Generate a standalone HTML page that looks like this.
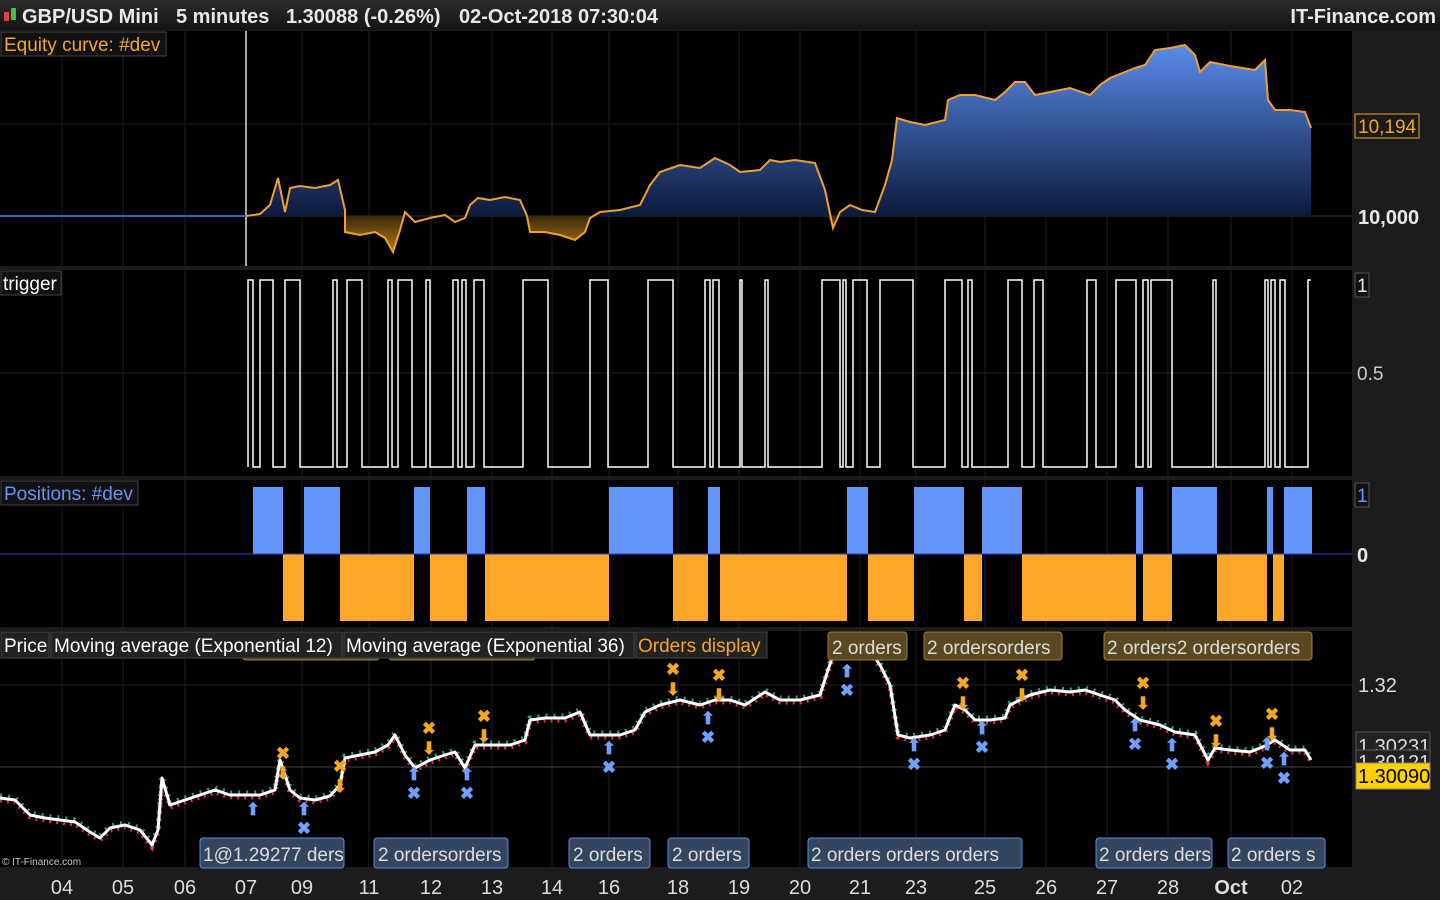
<!DOCTYPE html>
<html><head><meta charset="utf-8"><style>
html,body{margin:0;padding:0;background:#000;width:1440px;height:900px;overflow:hidden;font-family:"Liberation Sans",sans-serif}
svg text{font-family:"Liberation Sans",sans-serif}
</style></head><body>
<svg width="1440" height="900" viewBox="0 0 1440 900" xmlns="http://www.w3.org/2000/svg">
<defs>
<linearGradient id="hdr" x1="0" y1="0" x2="0" y2="1"><stop offset="0" stop-color="#2c2c2c"/><stop offset="1" stop-color="#141414"/></linearGradient>
<linearGradient id="blue" x1="0" y1="40" x2="0" y2="216" gradientUnits="userSpaceOnUse"><stop offset="0" stop-color="#5d8ff0"/><stop offset="1" stop-color="#0c1a3c"/></linearGradient>
<linearGradient id="org" x1="0" y1="216" x2="0" y2="255" gradientUnits="userSpaceOnUse"><stop offset="0" stop-color="#3a2a08"/><stop offset="1" stop-color="#c08020"/></linearGradient>
<clipPath id="above"><rect x="0" y="31" width="1352" height="185"/></clipPath>
<clipPath id="below"><rect x="0" y="216" width="1352" height="50"/></clipPath>
</defs>
<rect width="1440" height="900" fill="#1c1c1c"/>
<rect width="1440" height="30" fill="url(#hdr)"/>
<rect x="4" y="12" width="5" height="9" fill="#e04040"/><rect x="11" y="8" width="5" height="12" fill="#40c040"/>
<text x="22" y="23" font-size="20" font-weight="bold" fill="#e8e8e8">GBP/USD Mini</text>
<text x="176" y="23" font-size="20" font-weight="bold" fill="#e8e8e8">5 minutes</text>
<text x="286" y="23" font-size="20" font-weight="bold" fill="#e8e8e8">1.30088 (-0.26%)</text>
<text x="459" y="23" font-size="20" font-weight="bold" fill="#e8e8e8">02-Oct-2018 07:30:04</text>
<text x="1436" y="23" font-size="20" font-weight="bold" fill="#e8e8e8" text-anchor="end">IT-Finance.com</text>

<rect x="0" y="31" width="1352" height="235" fill="#000"/>
<rect x="0" y="270" width="1352" height="206" fill="#000"/>
<rect x="0" y="480" width="1352" height="147" fill="#000"/>
<rect x="0" y="631" width="1352" height="236" fill="#000"/>
<g stroke="#1e1e1e" stroke-width="1">
<path d="M62 31V867M123 31V867M185 31V867M302 31V867M369 31V867M431 31V867M492 31V867M552 31V867M609 31V867M678 31V867M739 31V867M800 31V867M860 31V867M916 31V867M985 31V867M1046 31V867M1107 31V867M1168 31V867M1231 31V867M1292 31V867"/>
<path d="M0 124H1352M0 373H1352M0 685H1352"/>
</g>
<path d="M0 216H1352" stroke="#333"/>
<path d="M0 767H1352" stroke="#444"/>
<path d="M246 31V266" stroke="#ddd" stroke-width="1.5"/>

<g>
<path id="eq" d="M246,216 L260,214 L270,205 L278,178 L285,212 L290,188 L300,186 L315,188 L330,185 L338,180 L345,210 L345,232 L360,235 L375,232 L385,238 L393,252 L400,230 L405,212 L415,222 L430,218 L445,215 L455,222 L465,218 L470,205 L478,198 L490,200 L505,197 L520,200 L527,216 L530,232 L545,232 L560,235 L575,240 L585,232 L590,218 L600,212 L620,210 L640,205 L650,185 L660,172 L680,165 L700,168 L715,158 L730,165 L740,172 L760,170 L770,160 L780,162 L795,160 L815,163 L825,190 L833,228 L840,212 L850,205 L862,210 L875,212 L885,185 L892,160 L897,118 L910,122 L925,125 L945,120 L948,100 L960,95 L975,95 L995,100 L1005,92 L1015,82 L1025,82 L1035,95 L1050,92 L1070,88 L1090,95 L1100,85 L1110,78 L1125,72 L1135,68 L1145,65 L1155,50 L1170,48 L1185,45 L1195,55 L1200,72 L1210,62 L1230,66 L1255,70 L1265,60 L1268,100 L1275,110 L1290,110 L1305,112 L1311,128" fill="none"/>
<path d="M246,216 L260,214 L270,205 L278,178 L285,212 L290,188 L300,186 L315,188 L330,185 L338,180 L345,210 L345,232 L360,235 L375,232 L385,238 L393,252 L400,230 L405,212 L415,222 L430,218 L445,215 L455,222 L465,218 L470,205 L478,198 L490,200 L505,197 L520,200 L527,216 L530,232 L545,232 L560,235 L575,240 L585,232 L590,218 L600,212 L620,210 L640,205 L650,185 L660,172 L680,165 L700,168 L715,158 L730,165 L740,172 L760,170 L770,160 L780,162 L795,160 L815,163 L825,190 L833,228 L840,212 L850,205 L862,210 L875,212 L885,185 L892,160 L897,118 L910,122 L925,125 L945,120 L948,100 L960,95 L975,95 L995,100 L1005,92 L1015,82 L1025,82 L1035,95 L1050,92 L1070,88 L1090,95 L1100,85 L1110,78 L1125,72 L1135,68 L1145,65 L1155,50 L1170,48 L1185,45 L1195,55 L1200,72 L1210,62 L1230,66 L1255,70 L1265,60 L1268,100 L1275,110 L1290,110 L1305,112 L1311,128 L1311,216 Z" fill="url(#blue)" clip-path="url(#above)"/>
<path d="M246,216 L345,216 L345,232 L360,235 L375,232 L385,238 L393,252 L400,230 L405,216 L527,216 L530,232 L545,232 L560,235 L575,240 L585,232 L590,216 L828,216 L833,228 L836,216 Z" fill="url(#org)" clip-path="url(#below)"/>
<path d="M0 216H246" stroke="#3a60c0" stroke-width="2"/>
<use href="#eq" stroke="#f0a030" stroke-width="2"/>
</g>
<rect x="1" y="32" width="165" height="24" fill="#111" stroke="#444"/>
<text x="4" y="51" font-size="19" fill="#f5a623">Equity curve: #dev</text>
<rect x="1355" y="114" width="64" height="24" fill="#1a1a1a" stroke="#f5a623"/>
<text x="1358" y="133" font-size="19" fill="#f5a623">10,194</text>
<text x="1358" y="224" font-size="20" font-weight="bold" fill="#e8e8e8">10,000</text>

<path d="M248,467 L248,280 L253,280 L253,467 L260,467 L260,280 L273,280 L273,467 L285,467 L285,280 L300,280 L300,467 L333,467 L333,280 L337,280 L337,467 L347,467 L347,280 L362,280 L362,467 L388,467 L388,280 L392,280 L392,467 L398,467 L398,280 L412,280 L412,467 L426,467 L426,280 L430,280 L430,467 L453,467 L453,280 L458,280 L458,467 L462,467 L462,280 L466,280 L466,467 L474,467 L474,280 L484,280 L484,467 L523,467 L523,280 L548,280 L548,467 L590,467 L590,280 L608,280 L608,467 L648,467 L648,280 L673,280 L673,467 L705,467 L705,280 L710,280 L710,467 L713,467 L713,280 L719,280 L719,467 L740,467 L740,280 L742,280 L742,467 L765,467 L765,280 L768,280 L768,467 L822,467 L822,280 L840,280 L840,467 L843,467 L843,280 L846,280 L846,467 L853,467 L853,280 L867,280 L867,467 L880,467 L880,280 L913,280 L913,467 L945,467 L945,280 L962,280 L962,467 L968,467 L968,280 L972,280 L972,467 L1008,467 L1008,280 L1022,280 L1022,467 L1034,467 L1034,280 L1043,280 L1043,467 L1087,467 L1087,280 L1096,280 L1096,467 L1116,467 L1116,280 L1136,280 L1136,467 L1143,467 L1143,280 L1148,280 L1148,467 L1151,467 L1151,280 L1172,280 L1172,467 L1213,467 L1213,280 L1216,280 L1216,467 L1265,467 L1265,280 L1268,280 L1268,467 L1271,467 L1271,280 L1275,280 L1275,467 L1280,467 L1280,280 L1285,280 L1285,467 L1308,467 L1308,280 L1311,280" fill="none" stroke="#fff" stroke-width="1.5"/>
<rect x="1" y="271" width="60" height="24" fill="#111" stroke="#444"/>
<text x="3" y="290" font-size="19" fill="#fff">trigger</text>
<rect x="1355" y="273" width="14" height="24" fill="#111" stroke="#555"/>
<text x="1357" y="292" font-size="19" fill="#e8e8e8">1</text>
<text x="1357" y="380" font-size="19" fill="#ccc">0.5</text>

<g fill="#6495fa">
<rect x="253" y="487" width="30" height="67"/><rect x="304" y="487" width="36" height="67"/><rect x="414" y="487" width="16" height="67"/><rect x="467" y="487" width="18" height="67"/><rect x="609" y="487" width="64" height="67"/><rect x="708" y="487" width="12" height="67"/><rect x="847" y="487" width="21" height="67"/><rect x="914" y="487" width="50" height="67"/><rect x="982" y="487" width="40" height="67"/><rect x="1136" y="487" width="7" height="67"/><rect x="1172" y="487" width="45" height="67"/><rect x="1267" y="487" width="6" height="67"/><rect x="1284" y="487" width="28" height="67"/>
</g>
<g fill="#fca62a">
<rect x="283" y="554" width="21" height="67"/><rect x="340" y="554" width="74" height="67"/><rect x="430" y="554" width="37" height="67"/><rect x="485" y="554" width="124" height="67"/><rect x="673" y="554" width="35" height="67"/><rect x="720" y="554" width="127" height="67"/><rect x="868" y="554" width="46" height="67"/><rect x="964" y="554" width="18" height="67"/><rect x="1022" y="554" width="114" height="67"/><rect x="1143" y="554" width="29" height="67"/><rect x="1217" y="554" width="50" height="67"/><rect x="1273" y="554" width="11" height="67"/>
</g>
<path d="M0 554H1352" stroke="#3040d0" stroke-width="1"/>
<rect x="1" y="481" width="137" height="24" fill="#111" stroke="#444"/>
<text x="4" y="500" font-size="19" fill="#6495fa">Positions: #dev</text>
<rect x="1355" y="483" width="14" height="24" fill="#111" stroke="#555"/>
<text x="1357" y="502" font-size="19" fill="#6495fa">1</text>
<text x="1357" y="562" font-size="20" font-weight="bold" fill="#e8e8e8">0</text>

<path d="M0,798 L15,800 L30,815 L45,818 L60,820 L75,822 L90,832 L100,838 L110,828 L125,825 L140,830 L152,845 L158,830 L162,778 L170,805 L185,800 L200,795 L215,790 L230,795 L245,795 L260,795 L275,790 L280,760 L290,790 L300,798 L315,800 L330,796 L340,785 L345,758 L360,755 L375,752 L388,745 L395,735 L405,755 L415,768 L430,760 L445,755 L455,752 L465,768 L475,745 L490,745 L510,745 L525,740 L530,720 L545,718 L565,718 L580,712 L590,735 L605,735 L620,735 L635,730 L645,712 L660,705 L680,700 L700,705 L715,700 L730,700 L745,705 L765,692 L780,700 L800,700 L820,695 L828,670 L835,650 L850,645 L868,648 L880,665 L890,685 L898,735 L910,738 L930,735 L945,730 L955,705 L965,710 L975,720 L990,720 L1005,718 L1010,705 L1030,695 L1050,690 L1070,692 L1085,690 L1100,695 L1115,700 L1125,710 L1140,720 L1160,725 L1175,732 L1195,735 L1208,760 L1215,748 L1230,750 L1250,752 L1265,746 L1275,740 L1290,750 L1305,750 L1311,760" fill="none" stroke="#e03030" stroke-width="5" stroke-dasharray="2 5" transform="translate(0,2)"/>
<path d="M0,798 L15,800 L30,815 L45,818 L60,820 L75,822 L90,832 L100,838 L110,828 L125,825 L140,830 L152,845 L158,830 L162,778 L170,805 L185,800 L200,795 L215,790 L230,795 L245,795 L260,795 L275,790 L280,760 L290,790 L300,798 L315,800 L330,796 L340,785 L345,758 L360,755 L375,752 L388,745 L395,735 L405,755 L415,768 L430,760 L445,755 L455,752 L465,768 L475,745 L490,745 L510,745 L525,740 L530,720 L545,718 L565,718 L580,712 L590,735 L605,735 L620,735 L635,730 L645,712 L660,705 L680,700 L700,705 L715,700 L730,700 L745,705 L765,692 L780,700 L800,700 L820,695 L828,670 L835,650 L850,645 L868,648 L880,665 L890,685 L898,735 L910,738 L930,735 L945,730 L955,705 L965,710 L975,720 L990,720 L1005,718 L1010,705 L1030,695 L1050,690 L1070,692 L1085,690 L1100,695 L1115,700 L1125,710 L1140,720 L1160,725 L1175,732 L1195,735 L1208,760 L1215,748 L1230,750 L1250,752 L1265,746 L1275,740 L1290,750 L1305,750 L1311,760" fill="none" stroke="#20a090" stroke-width="5" stroke-dasharray="2 6" transform="translate(0,-2)"/>
<path d="M0,798 L15,800 L30,815 L45,818 L60,820 L75,822 L90,832 L100,838 L110,828 L125,825 L140,830 L152,845 L158,830 L162,778 L170,805 L185,800 L200,795 L215,790 L230,795 L245,795 L260,795 L275,790 L280,760 L290,790 L300,798 L315,800 L330,796 L340,785 L345,758 L360,755 L375,752 L388,745 L395,735 L405,755 L415,768 L430,760 L445,755 L455,752 L465,768 L475,745 L490,745 L510,745 L525,740 L530,720 L545,718 L565,718 L580,712 L590,735 L605,735 L620,735 L635,730 L645,712 L660,705 L680,700 L700,705 L715,700 L730,700 L745,705 L765,692 L780,700 L800,700 L820,695 L828,670 L835,650 L850,645 L868,648 L880,665 L890,685 L898,735 L910,738 L930,735 L945,730 L955,705 L965,710 L975,720 L990,720 L1005,718 L1010,705 L1030,695 L1050,690 L1070,692 L1085,690 L1100,695 L1115,700 L1125,710 L1140,720 L1160,725 L1175,732 L1195,735 L1208,760 L1215,748 L1230,750 L1250,752 L1265,746 L1275,740 L1290,750 L1305,750 L1311,760" fill="none" stroke="#fff" stroke-width="3" stroke-linejoin="round"/>

<g font-size="17" font-weight="bold" text-anchor="middle">
<g fill="#f5a623">
<text x="283" y="759">✖</text><text x="283" y="779">⬇</text>
<text x="340" y="772">✖</text><text x="340" y="792">⬇</text>
<text x="429" y="734">✖</text><text x="429" y="754">⬇</text>
<text x="484" y="722">✖</text><text x="484" y="742">⬇</text>
<text x="673" y="675">✖</text><text x="673" y="695">⬇</text>
<text x="719" y="681">✖</text><text x="719" y="701">⬇</text>
<text x="963" y="689">✖</text><text x="963" y="709">⬇</text>
<text x="1022" y="681">✖</text><text x="1022" y="701">⬇</text>
<text x="1143" y="689">✖</text><text x="1143" y="709">⬇</text>
<text x="1216" y="727">✖</text><text x="1216" y="747">⬇</text>
<text x="1272" y="720">✖</text><text x="1272" y="740">⬇</text>
</g>
<g fill="#6fa0ff">
<text x="253" y="815">⬆</text>
<text x="304" y="815">⬆</text><text x="304" y="834">✖</text>
<text x="414" y="780">⬆</text><text x="414" y="799">✖</text>
<text x="467" y="780">⬆</text><text x="467" y="799">✖</text>
<text x="609" y="754">⬆</text><text x="609" y="773">✖</text>
<text x="708" y="724">⬆</text><text x="708" y="743">✖</text>
<text x="847" y="677">⬆</text><text x="847" y="696">✖</text>
<text x="914" y="751">⬆</text><text x="914" y="770">✖</text>
<text x="982" y="734">⬆</text><text x="982" y="753">✖</text>
<text x="1135" y="731">⬆</text><text x="1135" y="750">✖</text>
<text x="1172" y="751">⬆</text><text x="1172" y="770">✖</text>
<text x="1267" y="750">⬆</text><text x="1267" y="769">✖</text>
<text x="1284" y="765">⬆</text><text x="1284" y="784">✖</text>
</g>
</g>

<g font-size="19" fill="#ddd">
<rect x="243" y="650" width="136" height="10" fill="#5a4820" stroke="#a0803a" rx="3"/>
<rect x="389" y="650" width="146" height="10" fill="#5a4820" stroke="#a0803a" rx="3"/>
<rect x="828" y="632" width="79" height="28" fill="#5a4820" stroke="#a0803a" rx="3"/><text x="832" y="654">2 orders</text>
<rect x="924" y="632" width="138" height="28" fill="#5a4820" stroke="#a0803a" rx="3"/><text x="927" y="654">2 ordersorders</text>
<rect x="1104" y="632" width="208" height="28" fill="#5a4820" stroke="#a0803a" rx="3"/><text x="1107" y="654">2 orders2 ordersorders</text>
</g>
<rect x="1" y="632" width="766" height="26" fill="#181818"/>
<rect x="1" y="632" width="48" height="26" fill="#222" stroke="#444"/><text x="4" y="652" font-size="19" fill="#fff">Price</text>
<rect x="51" y="632" width="291" height="26" fill="#222" stroke="#444"/><text x="54" y="652" font-size="19" fill="#fff">Moving average (Exponential 12)</text>
<rect x="344" y="632" width="290" height="26" fill="#222" stroke="#444"/><text x="346" y="652" font-size="19" fill="#fff">Moving average (Exponential 36)</text>
<rect x="636" y="632" width="131" height="26" fill="#222" stroke="#444"/><text x="638" y="652" font-size="19" fill="#f5a623">Orders display</text>

<g font-size="19" fill="#ddd">
<rect x="200" y="838" width="144" height="30" fill="#34465e" stroke="#5a8ae8" rx="3"/><text x="203" y="861">1@1.29277 ders</text>
<rect x="374" y="838" width="134" height="30" fill="#34465e" stroke="#5a8ae8" rx="3"/><text x="378" y="861">2 ordersorders</text>
<rect x="569" y="838" width="81" height="30" fill="#34465e" stroke="#5a8ae8" rx="3"/><text x="573" y="861">2 orders</text>
<rect x="668" y="838" width="81" height="30" fill="#34465e" stroke="#5a8ae8" rx="3"/><text x="672" y="861">2 orders</text>
<rect x="808" y="838" width="214" height="30" fill="#34465e" stroke="#5a8ae8" rx="3"/><text x="811" y="861">2 orders  orders  orders</text>
<rect x="1096" y="838" width="116" height="30" fill="#34465e" stroke="#5a8ae8" rx="3"/><text x="1099" y="861">2 orders ders</text>
<rect x="1228" y="838" width="97" height="30" fill="#34465e" stroke="#5a8ae8" rx="3"/><text x="1231" y="861">2 orders s</text>
</g>
<text x="2" y="865" font-size="10" fill="#ccc">© IT-Finance.com</text>

<text x="1358" y="692" font-size="20" fill="#ddd">1.32</text>
<rect x="1356" y="732" width="74" height="24" fill="#222" stroke="#555"/><text x="1358" y="753" font-size="20" fill="#ddd">1.30231</text>
<rect x="1356" y="750" width="74" height="14" fill="#222" stroke="#555"/><text x="1358" y="769" font-size="20" fill="#ddd">1.30121</text>
<rect x="1356" y="763" width="74" height="26" fill="#ffd000" stroke="#888"/><text x="1358" y="783" font-size="20" fill="#000">1.30090</text>

<g font-size="20" fill="#ddd" text-anchor="middle">
<text x="62" y="894">04</text><text x="123" y="894">05</text><text x="185" y="894">06</text><text x="246" y="894">07</text><text x="302" y="894">09</text><text x="369" y="894">11</text><text x="431" y="894">12</text><text x="492" y="894">13</text><text x="552" y="894">14</text><text x="609" y="894">16</text><text x="678" y="894">18</text><text x="739" y="894">19</text><text x="800" y="894">20</text><text x="860" y="894">21</text><text x="916" y="894">23</text><text x="985" y="894">25</text><text x="1046" y="894">26</text><text x="1107" y="894">27</text><text x="1168" y="894">28</text><text x="1231" y="894" font-weight="bold">Oct</text><text x="1292" y="894">02</text>
</g>
</svg>
</body></html>
